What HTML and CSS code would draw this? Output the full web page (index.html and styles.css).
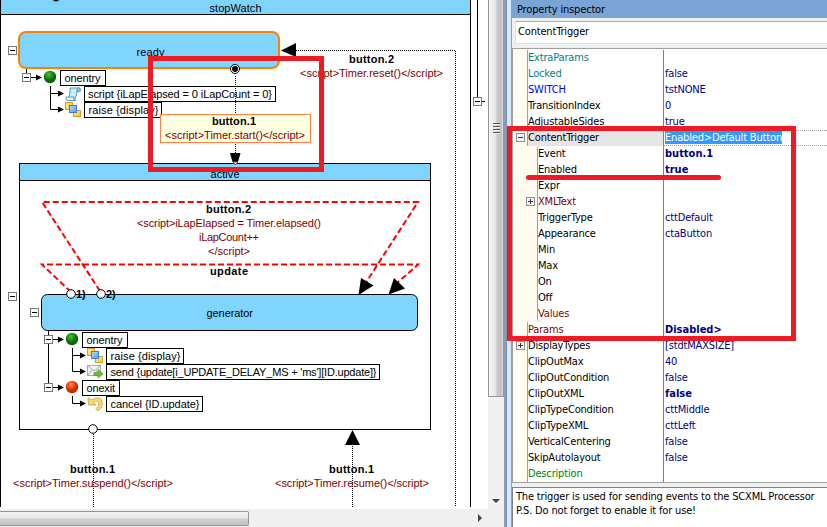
FILE: index.html
```html
<!DOCTYPE html>
<html lang="en">
<head>
<meta charset="utf-8">
<title>stopWatch</title>
<link rel="stylesheet" href="styles.css">
</head>
<body>
<div class="app">
  <main class="editor">
    <svg class="canvas" width="488" height="509" viewBox="0 0 488 509">
      <defs>
        <radialGradient id="green" cx=".4" cy=".3"><stop offset="0" stop-color="#5cb84a"/><stop offset=".6" stop-color="#159012"/><stop offset="1" stop-color="#086808"/></radialGradient>
        <radialGradient id="red" cx=".4" cy=".3"><stop offset="0" stop-color="#ff8a60"/><stop offset=".6" stop-color="#fb4512"/><stop offset="1" stop-color="#c82800"/></radialGradient>
        <linearGradient id="blueSq" x2="1" y2="1"><stop offset="0" stop-color="#b8dcff"/><stop offset="1" stop-color="#4f9df0"/></linearGradient>
        <linearGradient id="yellowSq" x2="1" y2="1"><stop offset="0" stop-color="#fff3a0"/><stop offset="1" stop-color="#ffc400"/></linearGradient>
        <g id="minus"><rect x=".5" y=".5" width="8" height="8" fill="#fff" stroke="#777"/><path d="M2 4.500H7" stroke="#000"/></g>
        <g id="arrow"><path d="M0 .5H7" stroke="#000"/><path d="M5-2.500L11 .5L5 3.500Z"/></g>
        <g id="raise"><rect x=".5" y=".5" width="7" height="7" fill="url(#yellowSq)" stroke="#dd9a32"/><rect x="8.500" y="8.500" width="7" height="6" fill="url(#yellowSq)" stroke="#dd9a32"/><rect x="4.500" y="3.500" width="7" height="7" fill="url(#blueSq)" stroke="#3c7fd2"/></g>
      </defs>

      <rect class="fill" x="1" y="0" width="469" height="14"/>
      <path class="line" d="M.5 0V507M470.500 0V507M0 14.500H471M477.500 0V97M481 101.500H485"/>
      <path d="M53 0Q56 3 59 0Z"/>
      <use href="#minus" x="473" y="97"/>
      <text x="209.500" y="12" textLength="52">stopWatch</text>

      <rect class="fill ready" x="19" y="32" width="260" height="36" rx="7"/>
      <text x="136.500" y="56" textLength="28">ready</text>
      <use href="#minus" x="8" y="46"/>
      <path class="line" d="M26.500 69V73M50.500 86V109.500H60M50.500 93.500H60"/>
      <use href="#minus" x="22" y="73"/>
      <use href="#arrow" x="31" y="77"/><use href="#arrow" x="53" y="93"/><use href="#arrow" x="53" y="109"/>
      <circle cx="50" cy="77" r="6.200" fill="url(#green)"/>
      <rect class="label" x="60.500" y="70.500" width="45" height="15"/><text x="64.500" y="82" textLength="36">onentry</text>
      <rect class="label" x="84.500" y="86.500" width="191" height="15"/><text x="88" y="98" textLength="184">script {iLapElapsed = 0 iLapCount = 0}</text>
      <rect class="label" x="84.500" y="102.500" width="77" height="15"/><text x="88.500" y="114" textLength="70">raise {display}</text>
      <g stroke="#4d9fc4"><path d="M70 88H79Q77 90 77 93L75 99H67Q70 97 70 92Z" fill="#c9edfb"/><path d="M77 92V88.500Q80.500 86 80.500 91Z" fill="#7cc5e5"/><path d="M66 97H74Q73 101 76 100.500H68Q65 100.500 66 97Z" fill="#e7f8ff"/></g>
      <use href="#raise" x="65" y="102"/>

      <path class="dots" d="M235.500 76V153M296 50.500H455.500V507M93.500 434V507M352.500 446V507"/>
      <path d="M281 50.500L296 43V57Z"/>
      <circle cx="235" cy="69" r="4.500" fill="#fff" stroke="#000"/><circle cx="235" cy="69" r="3"/>
      <text class="b" x="349" y="63" textLength="45">button.2</text>
      <text class="s" x="300" y="77" textLength="143">&lt;script&gt;Timer.reset()&lt;/script&gt;</text>
      <rect x="160.500" y="114.500" width="150" height="28" fill="#ffffe1" stroke="#ff8040"/>
      <text class="b" x="212" y="125" textLength="44">button.1</text>
      <text class="s" x="165" y="139" textLength="140">&lt;script&gt;Timer.start()&lt;/script&gt;</text>

      <rect class="line" x="19.500" y="163.500" width="411" height="266"/>
      <rect class="fill edge" x="19.500" y="163.500" width="411" height="17"/>
      <text x="210.500" y="178" textLength="29">active</text>
      <path d="M230 153H240.500L238 162H232.500Z"/><path d="M233 162H238L235.500 165Z" fill="#fff" stroke="#a0421c"/>

      <path class="loop" d="M100 291L42 202H418L365 284M71 292L42 264.500H418L396 284"/>
      <path d="M361 278L373.500 285.500L358.500 295ZM394 278L405 288.500L388.500 294.500Z"/>
      <text class="b" x="206" y="213" textLength="45">button.2</text>
      <text class="s" x="137" y="227" textLength="184">&lt;script&gt;iLapElapsed = Timer.elapsed()</text>
      <text class="s" x="199" y="241" textLength="60">iLapCount++</text>
      <text class="s" x="208" y="255" textLength="42">&lt;/script&gt;</text>
      <text class="b" x="210" y="275" textLength="38">update</text>

      <rect class="fill edge" x="41.500" y="294.500" width="376" height="36" rx="6"/>
      <circle class="port" cx="71" cy="294" r="4.300"/><circle class="port" cx="101" cy="294" r="4.300"/>
      <text class="b" x="76" y="298">1)</text><text class="b" x="106" y="298">2)</text>
      <text x="206.500" y="317" textLength="46.500">generator</text>
      <use href="#minus" x="8" y="292"/><use href="#minus" x="30" y="308"/>
      <path class="line" d="M48.500 331V383M72.500 348V371.500H80M72.500 355.500H80M72.500 396V403.500H80"/>
      <use href="#minus" x="44" y="335"/><use href="#minus" x="44" y="383"/>
      <use href="#arrow" x="53" y="339"/><use href="#arrow" x="53" y="387"/>
      <use href="#arrow" x="75" y="355"/><use href="#arrow" x="75" y="371"/><use href="#arrow" x="75" y="403"/>
      <circle cx="72" cy="339" r="6.200" fill="url(#green)"/><circle cx="72" cy="387" r="6.200" fill="url(#red)"/>
      <rect class="label" x="82.500" y="332.500" width="45" height="15"/><text x="86.500" y="344" textLength="36">onentry</text>
      <rect class="label" x="106.500" y="348.500" width="77" height="15"/><text x="110.500" y="360" textLength="70">raise {display}</text>
      <rect class="label" x="106.500" y="364.500" width="273" height="15"/><text x="110.500" y="376" textLength="266">send {update[i_UPDATE_DELAY_MS + 'ms'][ID.update]}</text>
      <rect class="label" x="82.500" y="380.500" width="37" height="15"/><text x="86.500" y="392" textLength="28.500">onexit</text>
      <rect class="label" x="106.500" y="396.500" width="96" height="15"/><text x="110.500" y="408" textLength="89">cancel {ID.update}</text>
      <use href="#raise" x="87" y="348"/>
      <g stroke="#aaa"><rect x="87.500" y="365.500" width="13" height="10" fill="#f1f1f1"/><path d="M88 366L94 371L100 366M88 375L92 370M100 375L96 370" fill="none"/></g>
      <path d="M94 372.500H98V369.500L103 374L98 378V375.500H94Z" fill="#68bd35" stroke="#4b9d25" stroke-width=".7"/>
      <path d="M88 397.500L88.500 405H96L93.500 402.500Q98 399.500 99 403Q99.500 406 96 408.500L98 411Q103 407 102.500 402.500Q101 395 91 400Z" fill="#f7dc76" stroke="#c79b2e" stroke-width=".8"/>

      <circle class="port" cx="93" cy="429" r="4.300"/>
      <path d="M352.500 430L360 445H345Z"/>
      <text class="b" x="70" y="473" textLength="45">button.1</text>
      <text class="s" x="13" y="487" textLength="160">&lt;script&gt;Timer.suspend()&lt;/script&gt;</text>
      <text class="b" x="329" y="473" textLength="45">button.1</text>
      <text class="s" x="275" y="487" textLength="154">&lt;script&gt;Timer.resume()&lt;/script&gt;</text>
    </svg>
    <div class="vscroll"><div class="vthumb"><i></i><i></i><i></i><i></i></div><span class="down"></span></div>
    <div class="hscroll"><div class="hthumb"></div><span class="right"></span></div>
  </main>
  <div class="splitter"></div>
  <aside class="inspector">
    <h1 class="title">Property inspector</h1>
    <div class="combo">ContentTrigger</div>
    <div class="props">
      <div class="row"><span class="name teal">ExtraParams</span><span class="val"></span></div>
      <div class="row"><span class="name teal">Locked</span><span class="val">false</span></div>
      <div class="row"><span class="name blue">SWITCH</span><span class="val">tstNONE</span></div>
      <div class="row"><span class="name">TransitionIndex</span><span class="val">0</span></div>
      <div class="row"><span class="name">AdjustableSides</span><span class="val">true</span></div>
      <div class="row current"><b class="box"></b><span class="name">ContentTrigger</span><span class="val"><mark>Enabled&gt;Default Button</mark></span></div>
      <div class="row sub first"><span class="name">Event</span><span class="val strong">button.1</span></div>
      <div class="row sub"><span class="name">Enabled</span><span class="val strong">true</span></div>
      <div class="row sub"><span class="name">Expr</span><span class="val"></span></div>
      <div class="row sub"><b class="box plus"></b><span class="name maroon">XMLText</span><span class="val"></span></div>
      <div class="row sub"><span class="name">TriggerType</span><span class="val">cttDefault</span></div>
      <div class="row sub"><span class="name">Appearance</span><span class="val">ctaButton</span></div>
      <div class="row sub"><span class="name">Min</span><span class="val"></span></div>
      <div class="row sub"><span class="name">Max</span><span class="val"></span></div>
      <div class="row sub"><span class="name">On</span><span class="val"></span></div>
      <div class="row sub"><span class="name">Off</span><span class="val"></span></div>
      <div class="row sub last"><span class="name maroon">Values</span><span class="val"></span></div>
      <div class="row"><span class="name maroon">Params</span><span class="val strong">Disabled&gt;</span></div>
      <div class="row"><b class="box plus"></b><span class="name">DisplayTypes</span><span class="val">[stdtMAXSIZE]</span></div>
      <div class="row"><span class="name">ClipOutMax</span><span class="val">40</span></div>
      <div class="row"><span class="name">ClipOutCondition</span><span class="val">false</span></div>
      <div class="row"><span class="name">ClipOutXML</span><span class="val strong">false</span></div>
      <div class="row"><span class="name">ClipTypeCondition</span><span class="val">cttMiddle</span></div>
      <div class="row"><span class="name">ClipTypeXML</span><span class="val">cttLeft</span></div>
      <div class="row"><span class="name">VerticalCentering</span><span class="val">false</span></div>
      <div class="row"><span class="name">SkipAutolayout</span><span class="val">false</span></div>
      <div class="row"><span class="name green">Description</span><span class="val"></span></div>
    </div>
    <div class="hint"><p>The trigger is used for sending events to the SCXML Processor</p><p>P.S. Do not forget to enable it for use!</p></div>
  </aside>
  <svg class="marks" width="827" height="527" viewBox="0 0 827 527">
    <path d="M150.500 58.500H321.500V169.500H150.500ZM509.500 128.500H793.500V338.500H509.500Z"/>
    <path class="round" d="M528.500 177.500H718.500"/>
  </svg>
</div>
</body>
</html>
```
FILE: styles.css
```css
* { box-sizing: border-box; }
body { margin: 0; overflow: hidden; background: #f0f0f0; }
.app { position: relative; display: flex; width: 827px; height: 527px; font-family: "DejaVu Sans Condensed", "DejaVu Sans", sans-serif; font-size: 11px; }

.editor { display: grid; grid-template-columns: 488px 16px; grid-template-rows: 509px 18px; }
.canvas { display: block; background: #fff; font: 11px "Liberation Sans", Arial, sans-serif; }
.fill { fill: #80d5ff; }
.ready { stroke: #ff8000; stroke-width: 2; }
.line { fill: none; stroke: #000; }
.edge { stroke: #000; }
.label { fill: #fff; stroke: #000; }
.port { fill: #fff; stroke: #000; }
.dots { fill: none; stroke: #000; stroke-dasharray: 1 1; }
.loop { fill: none; stroke: #f00; stroke-width: 2; stroke-dasharray: 6 3; }
.b { font-weight: bold; }
.s { fill: #800000; }

.vscroll { display: flex; flex-direction: column; justify-content: space-between; align-items: center; background: #f0f0f0; padding-bottom: 6px; }
.vthumb { display: flex; flex-direction: column; align-items: center; gap: 1px; width: 16px; height: 397px; padding-top: 123px; border: 1px solid #959595; border-top: 0; background: linear-gradient(90deg, #f5f5f5, #e7e7e7 45%, #cfcfcf 55%, #bfbfc3 85%, #dedede); }
.vthumb i { width: 7px; height: 2px; background: linear-gradient(#555 50%, #eee 50%); }
.down { border: 4px solid transparent; border-top-color: #444; border-bottom: 0; }
.hscroll { grid-column: 1 / 3; display: flex; justify-content: space-between; align-items: center; background: #f0f0f0; padding-right: 22px; }
.hthumb { width: 249px; height: 15px; border: 1px solid #959595; border-left: 0; border-radius: 0 2px 2px 0; background: linear-gradient(#f5f5f5, #e7e7e7 45%, #cfcfcf 55%, #c3c3c6); }
.right { border: 4px solid transparent; border-left-color: #444; border-right: 0; }
.splitter { width: 8px; background: linear-gradient(90deg, #999 2px, #6b96d0 2px 3px, #dbe7f7 3px 7px, #7ba3d6 7px); }

.inspector { display: flex; flex-direction: column; width: 315px; letter-spacing: -0.17px; }
.title { flex: none; height: 18px; margin: 0; padding-left: 5px; background: #7aa3d6; font-size: 11px; font-weight: normal; line-height: 20px; }
.combo { flex: none; height: 23px; margin: 3px 0 4px 3px; padding-left: 2px; border: 1px solid #dcdfe6; border-top-color: #abadb3; border-right: 0; background: #fff; line-height: 19px; }
.props { flex: none; height: 435px; padding-top: 1px; border: 1px solid #a0a0a0; border-right: 0; background: linear-gradient(90deg, #fffbf0 14px, #fff 14px); }
.row { position: relative; display: grid; grid-template-columns: 135px 1fr; height: 16px; margin-left: 14px; border-left: 1px solid #a0a0a0; line-height: 16px; white-space: nowrap; }
.val { padding-left: 1px; border-left: 1px solid #808080; color: #000080; }
.sub { grid-template-columns: 125px 1fr; margin-left: 24px; box-shadow: -10px 0 #fffbf0; }
.sub.first { border-top-left-radius: 4px; }
.sub.last { border-bottom-left-radius: 4px; }
.current .name { background: #e5e5e5; }
.current .val { border-top: 1px dotted #a0a0a0; border-bottom: 1px dotted #a0a0a0; line-height: 14px; }
mark { display: inline-block; height: 13px; background: #3399ff; color: #fff; }
.strong { font-weight: bold; letter-spacing: 0; }
.teal { color: #008080; }
.blue { color: #0000ff; }
.maroon { color: #800000; }
.green { color: #008000; }
.box { position: absolute; left: -12px; top: 3px; width: 9px; height: 9px; border: 1px solid #8f8f8f; background: linear-gradient(#335, #335) center / 5px 1px no-repeat, #f4f4f4; }
.plus { background: linear-gradient(#335, #335) center / 5px 1px no-repeat, linear-gradient(#335, #335) center / 1px 5px no-repeat, #f4f4f4; }
.hint { flex: 1; margin-top: 4px; padding: 2px 0 0 3px; border: 1px solid #828282; border-width: 1px 0 0 1px; background: #fff; white-space: nowrap; }
.hint p { margin: 0; line-height: 14px; }
.marks { position: absolute; left: 0; top: 0; fill: none; stroke: #ed1c24; stroke-width: 5; pointer-events: none; }
.round { stroke-linecap: round; }
```
